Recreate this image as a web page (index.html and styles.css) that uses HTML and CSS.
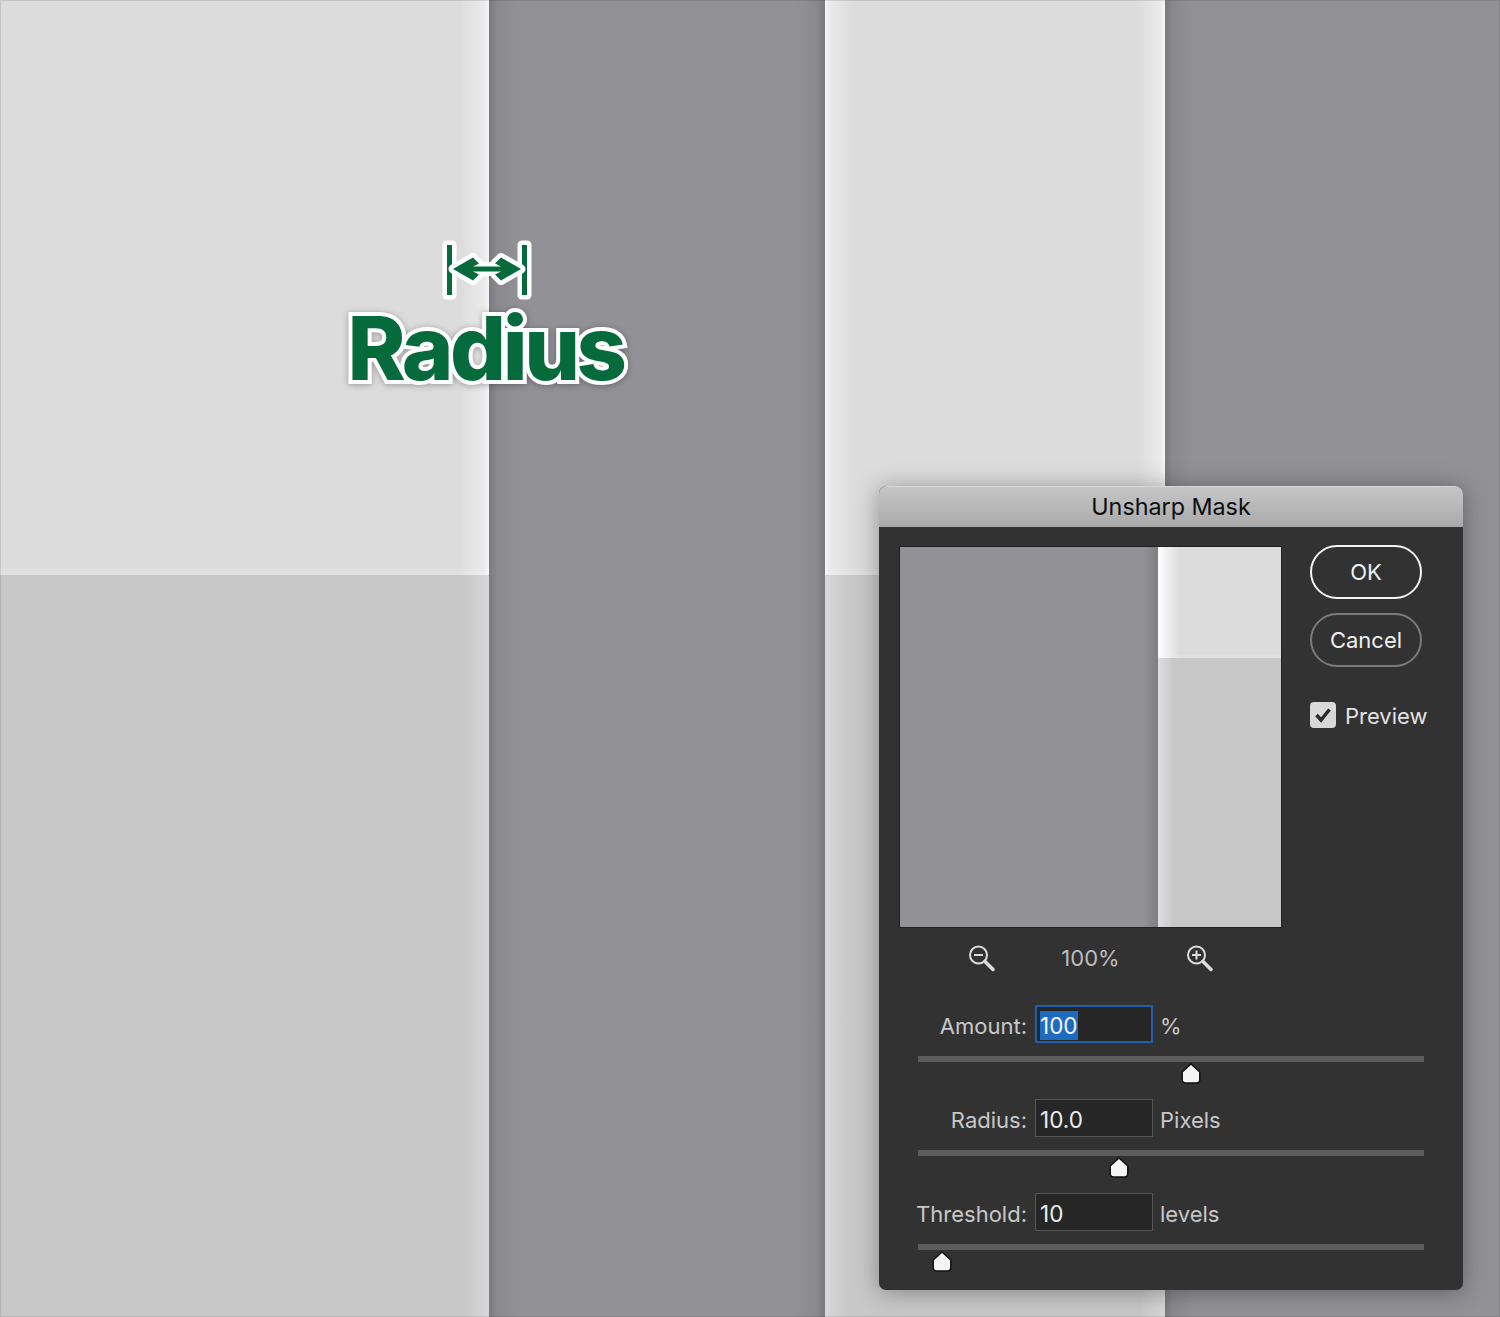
FILE: index.html
```html
<!DOCTYPE html>
<html lang="en">
<head>
  <meta charset="UTF-8">
  <meta name="viewport" content="width=device-width, initial-scale=1.0">
  <title>Unsharp Mask</title>
  <link rel="stylesheet" href="styles.css">
</head>
<body>
  <div class="stage">
    <div class="col col-a">
      <div class="cell cell-top"></div>
      <div class="cell cell-bottom"></div>
    </div>
    <div class="col col-b"></div>
    <div class="col col-c">
      <div class="cell cell-top"></div>
      <div class="cell cell-bottom"></div>
    </div>
    <div class="col col-d"></div>

    <!-- callout over the first edge -->
    <div class="callout">
      <svg class="callout-icon" width="95" height="64" viewBox="0 0 95 64">
        <g fill="#056b3c" stroke="#fff" stroke-width="9" stroke-linejoin="round" paint-order="stroke">
          <rect x="7" y="7" width="5" height="50"/>
          <rect x="82" y="7" width="5" height="50"/>
          <path d="M13 31 L33 19.500 L39 25.500 L33 28.500 L61 28.500 L55 25.500 L61 19.500 L81 31 L61 42.500 L55 36.500 L61 33.500 L33 33.500 L39 36.500 L33 42.500 Z"/>
        </g>
      </svg>
      <div class="callout-text">Radius</div>
    </div>

    <!-- dialog -->
    <div class="dialog">
      <div class="titlebar">Unsharp Mask</div>
      <div class="dialog-body">
        <div class="top-row">
          <div class="preview">
            <div class="preview-dark"></div>
            <div class="preview-light">
              <div class="preview-light-top"></div>
              <div class="preview-light-bottom"></div>
            </div>
          </div>
          <div class="side">
            <div class="btn btn-ok">OK</div>
            <div class="btn">Cancel</div>
            <div class="check-row">
              <span class="check">
                <svg width="20" height="20" viewBox="0 0 20 20"><path d="M3.500 10 L8 15 L16.500 4.500" fill="none" stroke="#2b2b2b" stroke-width="3.500"/></svg>
              </span>
              <span class="check-label">Preview</span>
            </div>
          </div>
        </div>

        <div class="zoom-row">
          <svg width="28" height="28" viewBox="0 0 28 28">
            <circle cx="11.500" cy="11" r="8.500" fill="none" stroke="#ddd" stroke-width="2"/>
            <path d="M7 11 H16" stroke="#ddd" stroke-width="2"/>
            <path d="M18 17.500 L26 25.500" stroke="#ddd" stroke-width="3.500" stroke-linecap="round"/>
          </svg>
          <span class="zoom-value">100%</span>
          <svg width="28" height="28" viewBox="0 0 28 28">
            <circle cx="11.500" cy="11" r="8.500" fill="none" stroke="#ddd" stroke-width="2"/>
            <path d="M7 11 H16 M11.500 6.500 V15.500" stroke="#ddd" stroke-width="2"/>
            <path d="M18 17.500 L26 25.500" stroke="#ddd" stroke-width="3.500" stroke-linecap="round"/>
          </svg>
        </div>

        <div class="fields">
          <div class="field">
            <div class="field-row">
              <label>Amount:</label>
              <div class="input input-active"><span class="selected">100</span></div>
              <span class="unit">%</span>
            </div>
            <div class="track">
              <svg class="thumb" style="left: 54%" width="20" height="21" viewBox="0 0 20 21"><path d="M10 1 L18.800 9 V16.500 Q18.800 20 15.500 20 H4.500 Q1.200 20 1.200 16.500 V9 Z" fill="#f4f4f4" stroke="#111" stroke-width="1.500"/></svg>
            </div>
          </div>
          <div class="field">
            <div class="field-row">
              <label>Radius:</label>
              <div class="input">10.0</div>
              <span class="unit">Pixels</span>
            </div>
            <div class="track">
              <svg class="thumb" style="left: 39.700%" width="20" height="21" viewBox="0 0 20 21"><path d="M10 1 L18.800 9 V16.500 Q18.800 20 15.500 20 H4.500 Q1.200 20 1.200 16.500 V9 Z" fill="#f4f4f4" stroke="#111" stroke-width="1.500"/></svg>
            </div>
          </div>
          <div class="field">
            <div class="field-row">
              <label>Threshold:</label>
              <div class="input">10</div>
              <span class="unit">levels</span>
            </div>
            <div class="track">
              <svg class="thumb" style="left: 4.700%" width="20" height="21" viewBox="0 0 20 21"><path d="M10 1 L18.800 9 V16.500 Q18.800 20 15.500 20 H4.500 Q1.200 20 1.200 16.500 V9 Z" fill="#f4f4f4" stroke="#111" stroke-width="1.500"/></svg>
            </div>
          </div>
        </div>
      </div>
    </div>
  </div>
</body>
</html>
```

FILE: styles.css
```css
* { box-sizing: border-box; }
body { margin: 0; font-family: Inter, "Liberation Sans", sans-serif; }

.stage { position: relative; display: flex; width: 1500px; height: 1317px; overflow: hidden; }
.stage::after { content: ""; position: absolute; inset: 0; border: 1px solid rgba(0,0,0,.1); pointer-events: none; }
.col { display: flex; flex-direction: column; height: 100%; }
.col-a { width: 489px; }
.col-b { width: 336px; background: linear-gradient(to right, #7b7b7f 0, #8a8a8e 8px, #929196 30px, #929196 calc(100% - 30px), #8a8a8e calc(100% - 8px), #7a7a7e 100%); }
.col-c { width: 340px; }
.col-d { width: 335px; background: linear-gradient(to right, #7b7b7f 0, #8a8a8e 8px, #929196 30px, #929196 100%); }

.cell-top { height: 575px; }
.cell-bottom { flex: 1; }
.col-a .cell-top { background: linear-gradient(to right, rgba(255,255,255,0) calc(100% - 30px), rgba(255,255,255,.4) calc(100% - 5px), rgba(255,255,255,.75) 100%), linear-gradient(to bottom, #dcdcdc calc(100% - 8px), #e4e4e4 100%); }
.col-a .cell-bottom { background: linear-gradient(to right, rgba(255,255,255,0) calc(100% - 24px), rgba(255,255,255,.3) 100%), #c8c8c8; }
.col-c .cell-top { background: linear-gradient(to right, rgba(255,255,255,.75) 0, rgba(255,255,255,.4) 5px, rgba(255,255,255,0) 28px, rgba(255,255,255,0) calc(100% - 28px), rgba(255,255,255,.4) calc(100% - 5px), rgba(255,255,255,.75) 100%), linear-gradient(to bottom, #dcdcdc calc(100% - 8px), #e4e4e4 100%); }
.col-c .cell-bottom { background: linear-gradient(to right, rgba(255,255,255,.3) 0, rgba(255,255,255,0) 24px, rgba(255,255,255,0) calc(100% - 24px), rgba(255,255,255,.3) 100%), #c8c8c8; }

.callout { position: absolute; left: 320px; top: 238px; width: 334px; display: flex; flex-direction: column; align-items: center; }
.callout-icon { display: block; }
.callout-text { margin: -4px 0 0 -3px; font-family: Inter, sans-serif; font-weight: 800; font-size: 88px; line-height: 100px; letter-spacing: -3.500px; color: #056b3c; -webkit-text-stroke: 8px #fff; paint-order: stroke fill; filter: drop-shadow(0 1px 3px rgba(0,0,0,.3)); }

.dialog { position: absolute; left: 879px; top: 486px; width: 584px; height: 804px; display: flex; flex-direction: column; border-radius: 8px 8px 7px 7px; background: #323232; box-shadow: 0 2px 24px rgba(0,0,0,.35); overflow: hidden; }
.titlebar { height: 41px; flex: none; background: linear-gradient(to bottom, #c6c6c6, #a9a9a9); border-top: 1px solid #d6d6d6; color: #0c0c0c; font-size: 23.300px; line-height: 40px; text-align: center; }
.dialog-body { flex: 1; padding: 19px 0 0 20px; color: #d2d2d2; font-size: 22px; }

.top-row { display: flex; }
.preview { width: 383px; height: 382px; display: flex; border: 1px solid #202020; border-bottom-color: #222; flex: none; }
.preview-dark { flex: 1; background: linear-gradient(to right, #929196 calc(100% - 14px), #7f7f82 100%); }
.preview-light { width: 123px; display: flex; flex-direction: column; }
.preview-light-top { height: 111px; background: linear-gradient(to right, #fff 0, rgba(255,255,255,0) 22px), linear-gradient(to bottom, #dcdcdc calc(100% - 4px), #e4e4e4 100%); }
.preview-light-bottom { flex: 1; background: linear-gradient(to right, rgba(255,255,255,.4) 0, rgba(255,255,255,0) 16px), #c8c8c8; }

.side { margin: -1px 0 0 28px; width: 120px; }
.btn { width: 112px; height: 54px; margin-bottom: 14px; border: 2px solid #7b7b7b; border-radius: 27px; color: #f0f0f0; text-align: center; line-height: 50px; }
.btn-ok { border-color: #f2f2f2; }
.check-row { display: flex; align-items: center; gap: 9px; height: 26px; margin-top: 35px; color: #e2e2e2; }
.check { width: 26px; height: 26px; display: flex; align-items: center; justify-content: center; border-radius: 4px; background: #d8d8d8; }
.check-label { padding-top: 2px; line-height: 26px; }

.zoom-row { display: flex; align-items: center; width: 382px; height: 60px; padding-left: 68px; }
.zoom-row svg { flex: none; }
.zoom-value { width: 189px; margin-left: 1px; text-align: center; color: #bdbdbd; }

.fields { margin-top: 17px; margin-left: 19px; }
.field { height: 94px; width: 506px; }
.field-row { display: flex; align-items: center; height: 38px; margin-bottom: 13px; }
.field-row label { width: 112px; margin: 4px 8px 0 -3px; flex: none; text-align: right; white-space: nowrap; color: #c8c8c8; }
.input { width: 118px; height: 38px; padding-left: 4px; margin-right: 7px; border: 1px solid #555; background: #262626; color: #ececec; font-size: 22.500px; line-height: 40px; }
.input-active { display: flex; align-items: center; padding: 2px 0 0 3px; border: 2px solid #1f5fae; }
.selected { line-height: 29px; background: #1f6bc0; color: #f4f4f4; }
.unit { margin-top: 4px; color: #c8c8c8; }

.track { position: relative; height: 6px; background: #5c5c5c; }
.thumb { position: absolute; top: 7px; margin-left: -10px; }
```
